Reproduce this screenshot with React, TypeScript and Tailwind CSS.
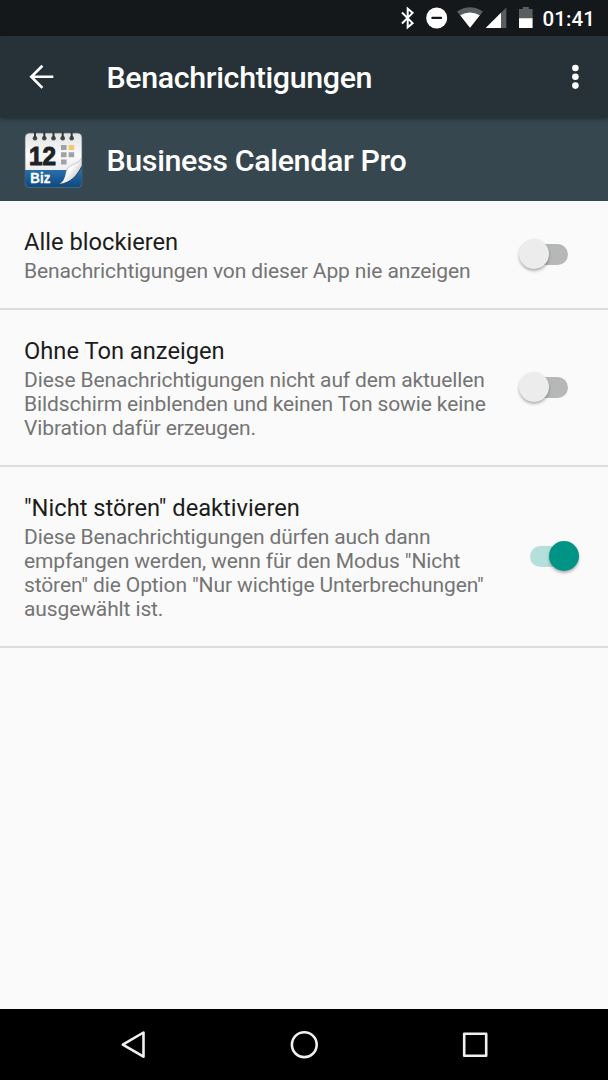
import { useState } from 'react';

const settings = [
  {
    title: 'Alle blockieren',
    lines: ['Benachrichtigungen von dieser App nie anzeigen'],
    on: false,
  },
  {
    title: 'Ohne Ton anzeigen',
    lines: [
      'Diese Benachrichtigungen nicht auf dem aktuellen',
      'Bildschirm einblenden und keinen Ton sowie keine',
      'Vibration dafür erzeugen.',
    ],
    on: false,
  },
  {
    title: '"Nicht stören" deaktivieren',
    lines: [
      'Diese Benachrichtigungen dürfen auch dann',
      'empfangen werden, wenn für den Modus "Nicht',
      'stören" die Option "Nur wichtige Unterbrechungen"',
      'ausgewählt ist.',
    ],
    on: true,
  },
];

const StatusBar = () => (
  <div className="h-9 shrink-0 bg-[#14181b] flex items-center justify-end pr-[13px]">
    <svg width="142" height="36" viewBox="394 0 142 36" className="mr-[6px]">
      {/* Bluetooth */}
      <path d="M402 12.5l10.6 10.6-4.9 4.3V8.6l4.9 4.3L402 23.5" fill="none" stroke="#fff" strokeWidth="2" />
      {/* Do not disturb */}
      <circle cx="436.7" cy="18" r="10.5" fill="#fff" />
      <rect x="431.3" y="16.7" width="10.8" height="2.4" rx="1" fill="#14181b" />
      {/* Wifi */}
      <path d="M457 11.6Q470 3 483 11.6L470 27.8z" fill="#5a5e60" />
      <path d="M460.2 15.3Q470 9.7 479.8 15.3L470 27.8z" fill="#fff" />
      {/* Signal */}
      <path d="M506.3 7.4V28H485.7z" fill="#5a5e60" />
      <path d="M501 12.7V28H485.7z" fill="#fff" />
      {/* Battery */}
      <path d="M519 9h3.8V7h6V9h3.8v9.6H519z" fill="#5a5e60" />
      <path d="M519 18.2h13.6V28H519z" fill="#fff" />
    </svg>
    <span className="mt-px text-[20.5px] leading-9 font-medium tracking-[0.1px] text-white">01:41</span>
  </div>
);

const AppIcon = () => (
  <svg width="60" height="60" viewBox="0 0 60 60" className="self-start mt-[12px]">
    <defs>
      <linearGradient id="paper" x1="0" y1="0" x2="0" y2="1">
        <stop offset="0" stopColor="#e2e2e2" />
        <stop offset="0.4" stopColor="#fafafa" />
        <stop offset="1" stopColor="#dedede" />
      </linearGradient>
      <linearGradient id="band" x1="0" y1="0" x2="0" y2="1">
        <stop offset="0" stopColor="#2870ac" />
        <stop offset="1" stopColor="#0b467f" />
      </linearGradient>
      <linearGradient id="curl" x1="0.2" y1="0.3" x2="0.8" y2="0.8">
        <stop offset="0" stopColor="#b4b8ba" />
        <stop offset="0.35" stopColor="#fff" />
        <stop offset="1" stopColor="#c4c6c8" />
      </linearGradient>
      <clipPath id="sheet">
        <rect x="1" y="3" width="57" height="54.5" rx="4.5" />
      </clipPath>
    </defs>
    <g clipPath="url(#sheet)">
      <rect x="1" y="3" width="57" height="55" fill="url(#paper)" />
      <rect x="1" y="40" width="57" height="18" fill="url(#band)" />
      <path d="M58 35L58 40L50 40z" fill="#1b6098" />
      <path d="M58 28C54 35 43 34 42 42Q41 51 35 54.5C47 53 53 46 58 36z" fill="url(#curl)" />
      <path d="M35 54.5C47 53 53 46 58 36" fill="none" stroke="#263f50" strokeWidth="1" />
      <path d="M58 28C54 35 43 34 42 42" fill="none" stroke="#a8acae" strokeWidth="0.6" />
    </g>
    <rect x="1" y="3" width="57" height="54.5" rx="4.5" fill="none" stroke="#52616a" strokeWidth="0.7" />
    {[11, 20.3, 29.5, 38.7, 47.7].map((x) => (
      <g key={x}>
        <circle cx={x} cy="8.3" r="2.3" fill="#42484b" />
        <path d={`M${x} 2.5v5`} stroke="#30383c" strokeWidth="2" strokeLinecap="round" />
      </g>
    ))}
    <text x="5" y="34.5" fontSize="26" fontWeight="700" fill="#1d2225" stroke="#1d2225" strokeWidth="1" textLength="27" lengthAdjust="spacingAndGlyphs" fontFamily="Liberation Sans, sans-serif">12</text>
    <path d="M37 15h5.6v5H37zM37 22.3h5.6v5H37zM44.6 22.3h5.6v5h-5.6zM37 29.4h5.6v5H37z" fill="#a0a3a5" />
    <path d="M44.6 15h5.6v5h-5.6z" fill="#f0ca70" />
    <text x="6.3" y="53" fontSize="14" fontWeight="700" fill="#fff" stroke="#fff" strokeWidth="0.3" textLength="20" lengthAdjust="spacingAndGlyphs" fontFamily="Liberation Sans, sans-serif">Biz</text>
  </svg>
);

const Toggle = ({ on, onClick }: { on: boolean; onClick: () => void }) => (
  <button
    role="switch"
    aria-checked={on}
    onClick={onClick}
    className={`flex items-center w-[50px] h-[30px] shrink-0 mb-[3px] ${on ? 'justify-end mr-[29px]' : 'mr-[39px]'}`}
  >
    <span className={`flex items-center w-[38px] h-[21px] rounded-full ${on ? 'bg-[#b5dfda] justify-end mr-[11px]' : 'bg-[#b6b7b7] ml-[11px]'}`}>
      <span
        className={`w-[30px] h-[30px] shrink-0 rounded-full shadow-[0_2px_3px_rgba(0,0,0,0.3)] ${on ? 'bg-[#009486] -mr-[11px]' : 'bg-[#ececec] -ml-[11px]'}`}
      />
    </span>
  </button>
);

const NavBar = () => (
  <div className="h-[71px] shrink-0 bg-black flex items-center justify-between pl-[119px] pr-[118px]">
    <svg width="28" height="30" viewBox="0 0 28 30" fill="none" stroke="#f0f0f0" strokeWidth="2.6" strokeLinejoin="round">
      <path d="M24.5 2.5V26.7L3.8 14.6z" />
    </svg>
    <svg width="30" height="30" viewBox="0 0 30 30" fill="none" stroke="#f0f0f0" strokeWidth="2.6">
      <circle cx="15.3" cy="14.7" r="12.4" />
    </svg>
    <svg width="30" height="30" viewBox="0 0 30 30" fill="none" stroke="#f0f0f0" strokeWidth="2.6" strokeLinejoin="round">
      <rect x="4.2" y="3.7" width="22" height="22" />
    </svg>
  </div>
);

export default function App() {
  const [states, setStates] = useState(settings.map((s) => s.on));

  const toggle = (index: number) => setStates(states.map((s, i) => (i === index ? !s : s)));

  return (
    <div className="w-[608px] h-[1080px] flex flex-col overflow-hidden bg-[#fafafa] font-['Roboto',sans-serif]">
      <StatusBar />

      {/* Toolbar */}
      <header className="relative z-10 h-[82px] shrink-0 bg-[#273238] flex items-center shadow-[0_2px_4px_rgba(0,0,0,0.3)]">
        <svg width="28" height="28" viewBox="0 0 28 28" className="ml-[28px]" fill="none" stroke="#fff" strokeWidth="2.6">
          <path d="M25.3 13.7H3.6M14.4 2.8L3.3 13.7L14.4 24.8" />
        </svg>
        <h1 className="ml-[50.5px] mt-[2px] flex-1 text-[30.4px] leading-[80px] font-medium tracking-[-0.36px] text-white whitespace-nowrap">Benachrichtigungen</h1>
        <svg width="8" height="28" viewBox="0 0 8 28" className="mr-[29px]" fill="#fff">
          <circle cx="4.4" cy="5" r="3.3" />
          <circle cx="4.4" cy="13.8" r="3.3" />
          <circle cx="4.4" cy="22.6" r="3.3" />
        </svg>
      </header>

      {/* App */}
      <div className="h-[83px] shrink-0 bg-[#37474f] flex items-center pl-[24px]">
        <AppIcon />
        <h2 className="ml-[22.5px] mt-[2px] text-[30.4px] leading-[81px] font-medium tracking-[-0.36px] text-white whitespace-nowrap">Business Calendar Pro</h2>
      </div>

      <main className="flex-1">
        {settings.map((s, i) => (
          <div key={s.title} className="flex items-center border-b-2 border-[#dddddd] pt-[27px] pb-[25px] pl-6">
            <div className="flex-1">
              <h3 className="text-[23.7px] leading-7 text-[#1c1c1c]">{s.title}</h3>
              <p className="mt-[3px] text-[21px] leading-6 tracking-[-0.12px] text-[#747474] whitespace-nowrap">
                {s.lines.map((line) => (
                  <span key={line} className="block">{line}</span>
                ))}
              </p>
            </div>
            <Toggle on={states[i]} onClick={() => toggle(i)} />
          </div>
        ))}
      </main>

      <NavBar />
    </div>
  );
}
